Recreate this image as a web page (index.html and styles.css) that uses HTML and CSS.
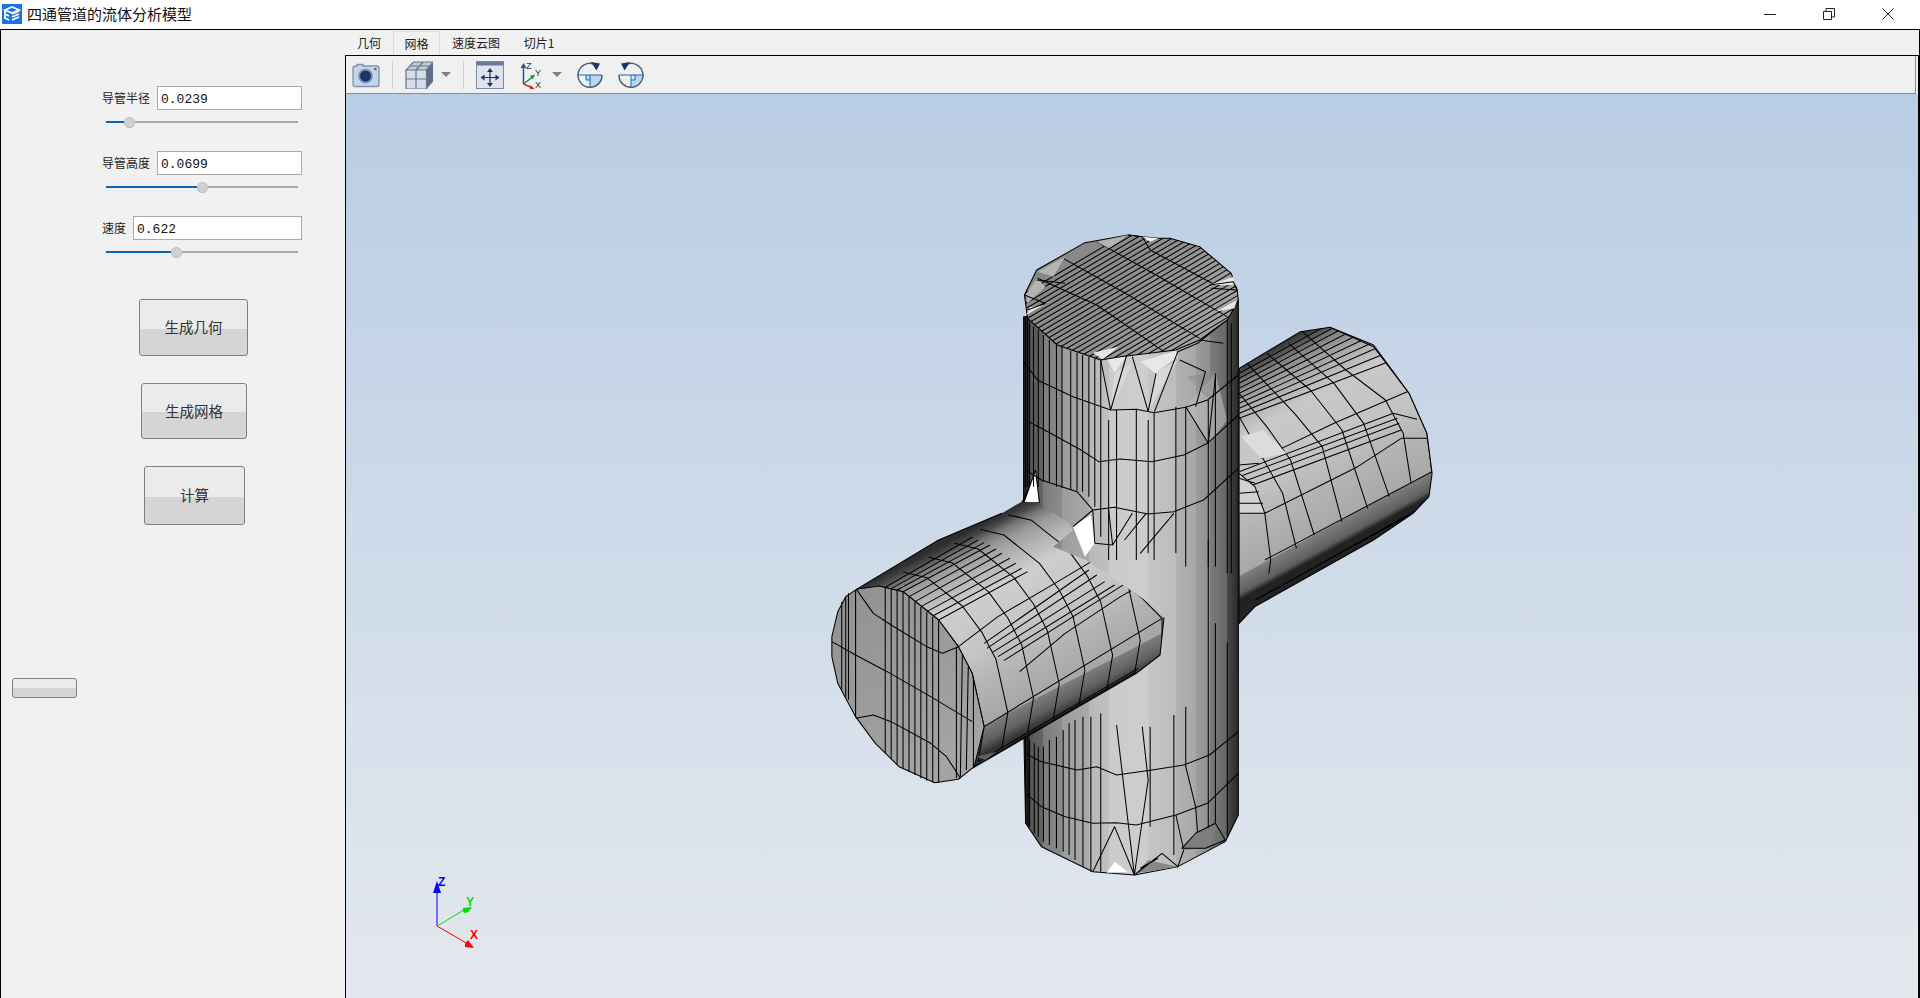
FILE: index.html
```html
<!DOCTYPE html>
<html lang="zh">
<head>
<meta charset="utf-8">
<title>四通管道的流体分析模型</title>
<link rel="stylesheet" href="styles.css">
</head>
<body>
<header class="titlebar">
  <svg class="appicon" viewBox="0 0 20 20"><rect width="20" height="20" fill="#1874e6"/><path d="M3 6l7-3 7 3-7 3zM3 6v9M3 10l4 2M3 14l4 2M10 10l7-3M10 13l7-3M10 16l7-3" fill="none" stroke="#fff" stroke-width="1.8"/></svg>
  <span class="apptitle">四通管道的流体分析模型</span>
  <div class="winbtns">
    <svg class="winbtn" viewBox="0 0 12 12"><path d="M0 6.500h12" stroke="#222" fill="none"/></svg>
    <svg class="winbtn" viewBox="0 0 12 12"><path d="M.5 3.500h8v8h-8zM3 3V.5h8.500V9H9" stroke="#222" fill="none"/></svg>
    <svg class="winbtn" viewBox="0 0 12 12"><path d="M.5.5l11 11M11.500.5l-11 11" stroke="#222" fill="none"/></svg>
  </div>
</header>
<div class="main">
  <aside class="side">
    <div class="field first"><label>导管半径</label><div class="input">0.0239</div></div>
    <div class="slider"><div class="fill f1"></div><div class="knob"></div><div class="rest"></div></div>
    <div class="field"><label>导管高度</label><div class="input">0.0699</div></div>
    <div class="slider"><div class="fill f2"></div><div class="knob"></div><div class="rest"></div></div>
    <div class="field"><label>速度</label><div class="input wide">0.622</div></div>
    <div class="slider"><div class="fill f3"></div><div class="knob"></div><div class="rest"></div></div>
    <button class="btn b1">生成几何</button>
    <button class="btn b2">生成网格</button>
    <button class="btn b3">计算</button>
    <button class="btn b4"></button>
  </aside>
  <section class="work">
    <nav class="tabs">
      <span class="tab t1">几何</span>
      <span class="tab on">网格</span>
      <span class="tab t3">速度云图</span>
      <span class="tab t4">切片1</span>
    </nav>
    <div class="viewer">
      <div class="toolbar">
        <svg class="tool w28 m6" viewBox="0 0 28 28"><path d="M1 7.500Q1 5 3.500 5H5V3.500h6V5h13.500Q27 5 27 7.500v16q0 2-2.500 2h-21Q1 25.500 1 23.500z" fill="#c6d6ea" stroke="#7f93b0" stroke-width="1.300"/><circle cx="13.500" cy="15" r="7.500" fill="#8296b5"/><circle cx="13.500" cy="15" r="5.500" fill="#1d3468"/><rect x="22" y="7" width="2.500" height="2" fill="#4a6a9a"/></svg>
        <i class="sep m12"></i>
        <svg class="tool w28 m12" viewBox="0 0 28 28"><path d="M1 9L8.500 1H28v19.500L21.500 28H1z" fill="#d5dbe4"/><path d="M21.500 9L28 1v19.500L21.500 28z" fill="#5e6f8b"/><path d="M1 9h20.500V28H1z" fill="#d8dee7"/><path d="M1 9L8.500 1H28L21.500 9z" fill="#c4ccd9"/><path d="M1 9h20.500L28 1H8.500zM1 9v19h20.500V9M11 9v19M1 18h20.500M18 1l-7 8M5 5h19.500" fill="none" stroke="#66768f" stroke-width="1.200"/></svg>
        <i class="tri m8"></i>
        <i class="sep m12"></i>
        <svg class="tool w28 m12" viewBox="0 0 28 28"><rect x=".5" y=".5" width="27" height="27" fill="#dfe4ec" stroke="#7b8aa3"/><rect x="1" y="1" width="26" height="3.500" fill="#66799b"/><path d="M14 10.500v12M8 16.500h12" stroke="#1d3468" stroke-width="1.200"/><path d="M14 7l-3 4h6zM14 26l-3-4h6zM4.500 16.500l4-3v6zM23.500 16.500l-4-3v6z" fill="#1d3468"/></svg>
        <svg class="tool w28 m16" viewBox="0 0 28 28"><path d="M3.500 23V6" stroke="#24509e" stroke-width="1.500"/><path d="M3.500 2l-3 5h6z" fill="#24509e"/><path d="M3.500 23l9-7" stroke="#1f8a3c" stroke-width="1.500"/><path d="M15 14l-5 .5 2.500 4z" fill="#1f8a3c"/><path d="M3.500 23l9 4" stroke="#d82c2c" stroke-width="1.500"/><path d="M15 28l-5-4v4z" fill="#d82c2c"/><text x="6" y="8" class="axt">Z</text><text x="15" y="15" class="axt">Y</text><text x="15" y="27" class="axt">X</text></svg>
        <i class="tri m4"></i>
        <svg class="tool w26 m15" viewBox="0 0 26 26"><path d="M13 13h12A12 12 0 0 1 13 25z" fill="#bcd5ef"/><path d="M9 13h4v5H9z" fill="#bcd5ef"/><path d="M1 13h24M13 13v12M9 13v5h4" fill="none" stroke="#1768b8"/><path d="M17 2A12 12 0 1 0 25 13" fill="none" stroke="#4a6183" stroke-width="1.500"/><path d="M14 0l9 1.500-3.500 7z" fill="#1d3468"/></svg>
        <svg class="tool w26 m15" viewBox="0 0 26 26"><path d="M13 13h12A12 12 0 0 1 13 25z" fill="#bcd5ef"/><path d="M13 13h4v5h-4z" fill="#dfeaf6"/><path d="M1 13h24M13 13v12M17 13v5h-4" fill="none" stroke="#1768b8"/><path d="M9 2A12 12 0 1 1 1 13" fill="none" stroke="#4a6183" stroke-width="1.500"/><path d="M12 0L3 1.500l3.500 7z" fill="#1d3468"/></svg>
      </div>
      <div class="scene">
        <svg class="model" viewBox="346 94 1572 904">
          <defs>
            <linearGradient id="gR" gradientUnits="userSpaceOnUse" x1="1220" y1="335" x2="1540" y2="830">
              <stop offset="0" stop-color="#333"/><stop offset=".04" stop-color="#555"/><stop offset=".08" stop-color="#808080"/><stop offset=".14" stop-color="#9c9c9c"/><stop offset=".22" stop-color="#b4b4b4"/><stop offset=".3" stop-color="#c8c8c8"/><stop offset=".55" stop-color="#c4c4c4"/><stop offset=".72" stop-color="#b4b4b4"/><stop offset=".895" stop-color="#a8a8a8"/><stop offset=".9" stop-color="#7e7e7e"/><stop offset=".975" stop-color="#5e5e5e"/><stop offset="1" stop-color="#222"/>
            </linearGradient>
            <linearGradient id="gL" gradientUnits="userSpaceOnUse" x1="92" y1="148" x2="400" y2="650">
              <stop offset="0" stop-color="#2e2e2e"/><stop offset=".035" stop-color="#4a4a4a"/><stop offset=".07" stop-color="#777"/><stop offset=".12" stop-color="#9a9a9a"/><stop offset=".2" stop-color="#b4b4b4"/><stop offset=".3" stop-color="#cecece"/><stop offset=".55" stop-color="#c4c4c4"/><stop offset=".7" stop-color="#b4b4b4"/><stop offset=".875" stop-color="#a6a6a6"/><stop offset=".88" stop-color="#7c7c7c"/><stop offset=".95" stop-color="#606060"/><stop offset="1" stop-color="#333"/>
            </linearGradient>
            <linearGradient id="gV" gradientUnits="userSpaceOnUse" x1="515" y1="0" x2="1058" y2="0">
              <stop offset="0" stop-color="#222"/><stop offset=".028" stop-color="#333"/><stop offset=".028" stop-color="#555"/><stop offset=".092" stop-color="#666"/><stop offset=".092" stop-color="#7c7c7c"/><stop offset=".179" stop-color="#8c8c8c"/><stop offset=".179" stop-color="#9c9c9c"/><stop offset=".304" stop-color="#aaa"/><stop offset=".304" stop-color="#b8b8b8"/><stop offset=".396" stop-color="#c0c0c0"/><stop offset=".396" stop-color="#cbcbcb"/><stop offset=".58" stop-color="#cdcdcd"/><stop offset=".58" stop-color="#c6c6c6"/><stop offset=".709" stop-color="#bcbcbc"/><stop offset=".709" stop-color="#b2b2b2"/><stop offset=".801" stop-color="#a8a8a8"/><stop offset=".801" stop-color="#9c9c9c"/><stop offset=".866" stop-color="#909090"/><stop offset=".866" stop-color="#7c7c7c"/><stop offset=".948" stop-color="#666"/><stop offset=".948" stop-color="#484848"/><stop offset="1" stop-color="#2a2a2a"/>
            </linearGradient>
            <linearGradient id="gC" gradientUnits="userSpaceOnUse" x1="600" y1="90" x2="950" y2="360">
              <stop offset="0" stop-color="#868686"/><stop offset=".5" stop-color="#8e8e8e"/><stop offset="1" stop-color="#a2a2a2"/>
            </linearGradient>
            <linearGradient id="gE" gradientUnits="userSpaceOnUse" x1="30" y1="200" x2="400" y2="600">
              <stop offset="0" stop-color="#929292"/><stop offset="1" stop-color="#a4a4a4"/>
            </linearGradient>
            <clipPath id="cpR"><path d="M1060 445L1215 335 1290 322 1400 375 1490 520 1535 640 1548 760 1540 830 1500 880 1400 960 1100 1160 1060 1210z"/></clipPath>
            <clipPath id="cpL"><path d="M92 148L300 0 460-80 510-115 555-110 630-50 640-30 590 20 680 65 815 175 870 232 860 345 800 400 385 685 350 718z"/></clipPath>
            <clipPath id="cpC"><path d="M517 225L548 150 670 68 780 45 815 50 855 55 885 55 960 80 1040 160 1055 210 1058 240 1030 300 960 360 900 390 760 410 710 420 600 375 525 295z"/></clipPath>
          </defs>
          <g transform="translate(820 220) scale(.3954 .33333)">
            <!-- right branch -->
            <path class="line" fill="url(#gR)" d="M1060 445L1215 335 1290 322 1400 375 1490 520 1535 640 1548 760 1540 830 1500 880 1400 960 1100 1160 1060 1210z"/>
            <g clip-path="url(#cpR)">
              <path class="line" d="M1060 460L1400 240M1060 475L1405 255M1060 490L1410 270M1060 505L1415 290M1060 520L1420 310M1060 535L1425 330M1060 550L1430 350M1060 565L1435 370M1060 580L1440 395M1060 595L1450 420M1115 715L1300 610 1485 515M1060 755L1450 580M1060 770L1460 595M1060 790L1465 610M1060 810L1470 630M1125 880L1360 740 1470 655 1535 655M1450 580L1510 598M1548 755L1125 1020M1530 860L1100 1140M1540 850L1110 1135"/>
              <path class="line" d="M1290 322L1400 380 1490 520 1535 640 1548 760M1220 335L1330 450 1430 540 1475 640 1495 790M1185 370L1300 490 1375 610 1440 830M1130 400L1240 510 1320 630 1385 865M1080 430L1200 580 1270 680 1320 905M1060 520L1130 620 1190 720 1250 945M1060 590L1120 715 1170 820 1205 985M1125 880L1140 1020 1135 1060"/>
              <path fill="#dcdcdc" d="M1065 650L1115 715 1180 700 1120 630z"/>
              <path class="line" fill="#d2d2d2" d="M1060 760L1100 800 1125 880 1060 880z"/>
              <path class="line" d="M1060 735L1110 730M1060 775L1100 790M1060 820L1110 815M1060 850L1120 850"/>
            </g>
            <!-- vertical branch -->
            <path class="line" fill="url(#gV)" d="M515 290L1058 240 1058 1785 1025 1865 905 1940 795 1965 690 1955 560 1880 520 1810 515 1500z"/>
            <path fill="#bdbdbd" d="M925 560L985 670 1030 600 1000 460z" opacity=".6"/>
            <path fill="#8a8a8a" d="M930 470L985 540 1000 450 975 460z" opacity=".5"/>
            <path fill="#d8d8d8" d="M745 460L735 570 790 430zM848 460L830 575 905 420z"/>
            <path fill="#e8e8e8" d="M725 415L775 408 745 458zM810 425L900 392 905 410 848 460zM695 400L755 380 720 420z"/>
            <path fill="#fff" d="M515 850L545 750 555 848zM640 920L685 885 695 970 670 1010z"/>
            <path class="line" d="M515 425L550 480 640 530 735 570 800 568 845 578 925 562 980 540 1058 465M520 600L560 625 660 690 705 725 760 717 840 725 920 705 980 670 1058 585M520 750L560 780 650 815 690 870 745 862 830 882 895 875 970 840 1058 745"/>
            <path class="line" d="M520 295V800M525 295V800M530 310V800M540 320V800M552 330V800M565 345V785M580 360V790M598 372V800M612 380V805M634 392V810M650 398V812M664 405V815M680 410V830M695 415V860M710 420V950M730 600V1020M750 570V1020M800 568V1020M830 600V1000M845 578V1020M900 560V1000M925 560V1040M982 540V1040M1000 460V1040M1030 300V1060M1040 310V1060"/>
            <path class="line" d="M710 420L735 570M775 408L735 570M790 410L830 575M850 460L830 575M905 395L845 578M910 420L975 455 950 560M925 560L982 670 1000 470M1028 300L955 370 905 395M960 360L1020 370"/>
            <path class="line" d="M545 750L555 848H510M545 750L515 850M530 800L510 850"/>
            <path class="line" d="M640 920L690 870 695 970 740 975 790 880M740 975L730 870M770 960L825 880M810 1000L895 880"/>
            <!-- top cap -->
            <path fill="url(#gC)" d="M517 225L548 150 670 68 780 45 815 50 855 55 885 55 960 80 1040 160 1055 210 1058 240 1030 300 960 360 900 390 760 410 710 420 600 375 525 295z"/>
            <g clip-path="url(#cpC)">
              <path class="line" d="M500 232L1100-188M500 248L1100-172M500 264L1100-156M500 280L1100-140M500 296L1100-124M500 312L1100-108M500 328L1100-92M500 344L1100-76M500 360L1100-60M500 376L1100-44M500 392L1100-28M500 408L1100-12M500 424L1100 4M500 440L1100 20M500 456L1100 36M500 472L1100 52M500 488L1100 68M500 504L1100 84M500 520L1100 100M500 536L1100 116M500 552L1100 132M500 568L1100 148M500 584L1100 164M500 600L1100 180M500 616L1100 196M500 632L1100 212M500 648L1100 228M500 664L1100 244"/>
            </g>
            <path class="line" d="M517 225L548 150 670 68 780 45 815 50 855 55 885 55 960 80 1040 160 1055 210 1058 240 1030 300 960 360 900 390 760 410 710 420 600 375 525 295z"/>
            <path class="line" d="M550 175L700 255 870 395M615 115L780 225 960 355M700 65L850 165 1030 290M780 45L815 50 835 90 1000 195"/>
            <path fill="#e6e6e6" d="M985 195L1045 170 1052 195zM1000 275L1055 240 1048 265zM522 285L530 262 565 255zM690 398L755 380 715 418z"/>
            <path fill="#b4b4b4" d="M520 225L548 175 570 200 525 250zM700 65L780 45 730 85zM550 155L620 110 590 170z"/>
            <path fill="#f4f4f4" d="M815 50L855 55 835 65z"/>
            <path class="line" d="M517 225L570 250 525 270M985 195L1045 185 1055 210 990 205M548 180L620 190"/>
            <!-- lower details and front branch -->
            <g transform="translate(0 960)">
              <path class="line" d="M518 640L560 665 650 690 700 680 750 705 840 690 920 675 985 645 1058 575M520 760L560 800 620 830 690 850 750 848 800 855 900 825 980 790 1058 700"/>
              <path class="line" d="M520 580V850M526 590V860M530 600V860M542 610V880M552 620V890M565 620V905M580 600V915M598 590V925M615 570V935M630 550V945M645 540V960M665 530V980M685 530V995M710 520V995M750 555L795 1005M815 560L830 720 795 1005M835 560V860M895 525V830 945M925 500V680L950 800 955 880M982 0V870M1000 250V850M1030 310V890"/>
              <path fill="#888" d="M800 1000L830 960 905 980z"/>
              <path fill="#fff" d="M725 998L745 965 778 995z"/>
              <path class="line" d="M690 995L745 860 795 1005 865 940 905 980 920 930 900 825M810 985L855 955"/>
              <path fill="#7e7e7e" d="M930 905L960 875 1005 850 985 925 915 930z"/>
              <path class="line" d="M915 925L950 880 1000 850 1025 900 975 925z"/>
              <!-- front pipe -->
              <path fill="url(#gL)" d="M92 148L300 0 460-80 510-115 555-110 630-50 640-30 590 20 680 65 815 175 870 232 860 345 800 400 385 685 350 718z"/>
              <g clip-path="url(#cpL)">
                <path fill="#e9e9e9" d="M600 25L660 0 680 65zM790 150L830 60 880 40 905 60 860 120 820 175z"/>
                <path fill="#f7f7f7" d="M610 20L650-20 675 60z"/>
                <path class="line" d="M165 142L385-8M180 146L400 0M195 150L415 8M210 155L430 15M225 170L445 27M240 185L460 40M255 200L480 55M270 215L495 70M285 228L510 85M300 240L525 95M350 320L450 230 580 140 700 55M505 395L620 280 760 170 820 130M415 310L680 90M422 325L700 105M435 338L720 125M450 350L745 135M465 362L780 125M415 560L865 235M390 680L800 395M400 665L805 385"/>
                <path class="line" id="ring" d="M150 138L210 155 300 240 350 320 385 400 415 560 400 665"/>
                <use href="#ring" transform="translate(60 -42)"/>
                <use href="#ring" transform="translate(125 -86)"/>
                <use href="#ring" transform="translate(190 -128)"/>
                <use href="#ring" transform="translate(255 -170)"/>
                <use href="#ring" transform="translate(325 -214)"/>
                <use href="#ring" transform="translate(395 -260)"/>
                <path class="line" d="M640-30L690 70 760 120 815 175 865 235 865 345M830 60L815 175M880 230L815 175"/>
                <path fill="#5e5e5e" d="M395 650L445 635 420 660z"/>
              </g>
              <path class="line" d="M92 148L300 0 460-80M385 685L800 400 860 345 870 232"/>
              <!-- end cap -->
              <path class="line" fill="url(#gE)" d="M92 148L150 138 210 155 300 240 350 320 385 400 415 560 390 680 350 718 290 728 200 680 140 610 90 530 65 475 45 430 30 350 30 290 45 215 65 170z"/>
              <path class="line" d="M165 142V640M180 146V655M195 150V672M210 155V685M225 170V695M240 185V705M255 200V715M270 215V722M285 230V727M300 240V728M55 185V450M65 170V470M72 160V480M90 150V530M345 320V715M360 345L355 710M375 380L370 690M388 410V680"/>
              <path class="line" d="M30 305L90 345 170 395 280 470 385 545M90 535L135 525 180 545 280 610 320 650 355 715M92 148L135 220 180 255 270 320 310 340 350 320"/>
            </g>
          </g>
          <path class="axis az" d="M437 926V888"/>
          <path class="axis ay" d="M437 926L464 910"/>
          <path class="axis ax" d="M437 926L468 944"/>
          <path class="hz" d="M437 881l-4 12h8z"/>
          <path class="hy" d="M472 907l-9 1q-1 5 3 5 3-1 6-6z"/>
          <path class="hx" d="M468 940l-3 4v3l9 1z"/>
          <text class="axl az" x="438" y="886">Z</text>
          <text class="axl ay" x="466" y="906">Y</text>
          <text class="axl ax" x="470" y="939">X</text>
        </svg>
      </div>
    </div>
  </section>
</div>
</body>
</html>
```
FILE: styles.css
```css
* { box-sizing: border-box; }
html, body { margin: 0; height: 100%; }
body {
  display: flex; flex-direction: column; height: 100vh; overflow: hidden;
  background: #fff; color: #222;
  font-family: "Noto Sans CJK SC", "Liberation Sans", sans-serif;
}
.titlebar {
  height: 30px; flex: none; display: flex; align-items: center;
  padding-left: 2px; background: #fff; border-bottom: 1px solid #000;
}
.appicon { width: 20px; height: 20px; margin-top: -2px; flex: none; }
.apptitle { font-size: 15px; margin-left: 5px; margin-top: -2px; color: #111; }
.winbtns { margin-left: auto; display: flex; gap: 47px; padding-right: 26px; margin-top: -2px; }
.winbtn { width: 12px; height: 12px; display: block; }
.main { flex: 1; display: flex; min-height: 0; }
.side {
  width: 345px; flex: none; display: flex; flex-direction: column;
  background: #f1f1f1; border-left: 1px solid #000;
}
.field { display: flex; align-items: center; justify-content: flex-end; height: 24px; padding-right: 43px; margin-top: 23px; }
.field.first { margin-top: 56px; }
.field label { font-size: 12px; color: #222; margin: -2px 7px 0 0; white-space: nowrap; }
.input {
  width: 145px; height: 24px; background: #fff; border: 1px solid #a9a9a9; overflow: hidden;
  font: 13px/25px "Liberation Mono", monospace; padding-left: 3px; color: #111;
}
.input.wide { width: 169px; }
.slider { display: flex; align-items: center; height: 12px; margin: 6px 47px 0 105px; }
.fill { height: 2px; background: #0b63b5; flex: none; }
.f1 { width: 18px; } .f2 { width: 91px; } .f3 { width: 65px; }
.rest { flex: 1; height: 2px; background: #aaa; }
.knob { width: 11px; height: 11px; border-radius: 50%; background: #d0d0d0; border: 1px dotted #aaa; flex: none; }
.btn {
  display: block; padding: 0 0 2px; flex: none; border: 1px solid #808080; border-radius: 3px;
  font: 14.500px "Noto Sans CJK SC", sans-serif; color: #333;
  background: linear-gradient(#ebebeb 0, #ebebeb 52%, #d5d5d5 52%, #d5d5d5 100%);
}
.b1 { width: 109px; height: 57px; margin: 41px 0 0 138px; }
.b2 { width: 106px; height: 56px; margin: 27px 0 0 140px; }
.b3 { width: 101px; height: 59px; margin: 27px 0 0 143px; }
.b4 { width: 65px; height: 20px; margin: 153px 0 0 11px; }
.work { flex: 1; display: flex; flex-direction: column; min-width: 0; background: #f1f1f1; border-right: 1px solid #000; }
.tabs { height: 25px; flex: none; display: flex; font-size: 12px; }
.tab { display: flex; align-items: center; justify-content: center; height: 25px; color: #222; white-space: nowrap; }
.t1 { width: 48px; }
.tab.on { width: 47px; border: 1px solid #dcdcdc; border-bottom: 0; margin: 1px 0 0 0; height: 24px; }
.t3 { width: 48px; margin-left: 12px; }
.t4 { width: 28px; margin-left: 25px; }
.viewer { flex: 1; display: flex; flex-direction: column; min-height: 0; border: 1px solid #000; border-bottom: 0; }
.toolbar { height: 38px; flex: none; display: flex; align-items: center; background: #f0f0f0; border-bottom: 1px solid #8a8a8a; border-right: 1px solid #8a8a8a; margin-right: 2px; }
.tool { display: block; flex: none; }
.w28 { width: 28px; height: 28px; }
.w26 { width: 26px; height: 26px; }
.m4 { margin-left: 4px; } .m6 { margin-left: 6px; } .m8 { margin-left: 8px; } .m12 { margin-left: 12px; }
.m15 { margin-left: 15px; } .m16 { margin-left: 16px; }
.sep { display: block; width: 1px; height: 28px; background: #cfcfcf; flex: none; }
.tri { display: block; width: 0; height: 0; flex: none; border: 5px solid transparent; border-top: 5px solid #808080; border-bottom: 0; }
.axt { font: 9px "Liberation Sans", sans-serif; fill: #333; }
.scene { flex: 1; min-height: 0; background: linear-gradient(#b9cde4, #e4e8ee); }
.model { display: block; width: 100%; height: 100%; }
.line { stroke: #000; stroke-width: 1.050; vector-effect: non-scaling-stroke; stroke-linejoin: round; }
.line:not([fill]) { fill: none; }
.axl { font: bold 12px "Liberation Sans", sans-serif; }
.az, .hz { fill: #0000ff; } .ay, .hy { fill: #00e000; } .ax, .hx { fill: #ff0000; }
path.axis { fill: none; stroke-width: 1; }
path.az { stroke: #0000ff; } path.ay { stroke: #00e000; } path.ax { stroke: #ff0000; }
```
